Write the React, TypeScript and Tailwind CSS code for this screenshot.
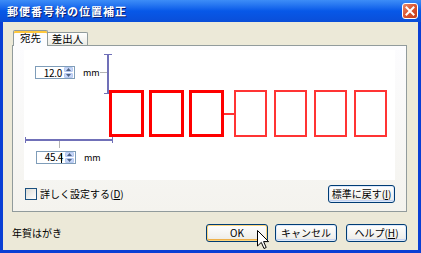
import React from "react";

const font = "font-['Noto_Sans_CJK_JP','Noto_Sans',sans-serif]";

const Spinner = ({ value, caret }: { value: string; caret?: boolean }) => (
  <div className="flex items-center gap-[8px]">
    <div className="w-[40px] h-[13px] border border-[#7f9db9] bg-white flex items-center justify-end pr-[1px]">
      <span className="text-[10px] leading-none text-black tracking-[-0.3px] pr-[2px]">
        {value}
        {caret && <span className="inline-block w-px h-[10px] bg-black align-middle -ml-[2px]" />}
      </span>
      <div className="w-[9px] h-[11px] flex flex-col gap-px">
        <div className="flex-1 rounded-[1px] bg-[#c6d6f7] border border-[#b5c8f0] flex items-center justify-center">
          <svg width="5" height="3" viewBox="0 0 5 3"><path d="M0 3 L2.5 0 L5 3 Z" fill="#4d6185" /></svg>
        </div>
        <div className="flex-1 rounded-[1px] bg-[#c6d6f7] border border-[#b5c8f0] flex items-center justify-center">
          <svg width="5" height="3" viewBox="0 0 5 3"><path d="M0 0 L2.5 3 L5 0 Z" fill="#4d6185" /></svg>
        </div>
      </div>
    </div>
    <span className="text-[9px] leading-none text-black">mm</span>
  </div>
);

const XpButton = ({ children, w, hot }: { children: React.ReactNode; w: string; hot?: boolean }) => (
  <div className={`${w} h-[18px] rounded-[3px] border border-[#003c74] bg-gradient-to-b from-white to-[#ecebe6] flex items-center justify-center text-[10px] text-black leading-none ${hot ? "shadow-[inset_0_0_0_1px_#fcd57e,inset_0_-1px_0_1px_#eeb04a]" : "shadow-[inset_0_0_0_1px_#dbe8fb,inset_0_-1px_0_1px_#c5d3f0]"}`}>
    {children}
  </div>
);

const Box = ({ thick }: { thick?: boolean }) => (
  <div className={`h-[47px] ${thick ? "w-[35px] border-[3px] border-[#ff0000]" : "w-[33px] border-2 border-[#ff3434]"} bg-white`} />
);

export default function App() {
  return (
    <div className={`relative w-[421px] h-[253px] flex flex-col bg-[#0a3fd4] ${font}`}>
      <div className="h-[22px] flex items-center pl-[7px] pr-[3px] bg-gradient-to-b from-[#3d8df7] via-[#0758e8] to-[#0a4ed8]">
        <span className="text-white font-bold text-[11px] leading-none tracking-[1px] [text-shadow:1px_1px_0_#0a1f6e]">郵便番号枠の位置補正</span>
        <div className="ml-auto w-[16px] h-[16px] rounded-[3px] border border-white bg-gradient-to-br from-[#e88a6a] via-[#d9532f] to-[#c23c1a] flex items-center justify-center">
          <svg width="10" height="10" viewBox="0 0 10 10">
            <path d="M1.5 1.5 L8.5 8.5 M8.5 1.5 L1.5 8.5" stroke="white" strokeWidth="2" strokeLinecap="square" />
          </svg>
        </div>
      </div>

      <div className="flex-1 mx-[3px] mb-[3px] bg-[#ece9d8] flex flex-col pl-[9px] pr-[11px] pt-[8px]">
        <div className="h-[15px] flex items-end pl-[1px]">
          <div className="relative z-10 w-[35px] h-[16px] -mb-px bg-[#fcfcfe] border border-b-0 border-[#919b9c] rounded-t-[2px] shadow-[inset_0_2px_0_#ffc83c] flex items-center justify-center text-[10.5px] leading-none text-black">
            宛先
          </div>
          <div className="w-[40px] h-[13px] bg-gradient-to-b from-white to-[#ecebe5] border border-l-0 border-b-0 border-[#919b9c] rounded-tr-[2px] flex items-center justify-center text-[10.5px] leading-none text-black">
            差出人
          </div>
        </div>

        <div className="h-[167px] border border-[#919b9c] bg-gradient-to-b from-[#fcfcfe] to-[#f4f3ee] flex flex-col px-[11px] pt-[4px]">
          <div className="relative h-[130px] bg-white">
            {/* vertical dimension */}
            <div className="absolute left-[83px] top-[4px] w-[2px] h-[40px] bg-[#7070b8]" />
            <div className="absolute left-[80px] top-[4px] w-[8px] h-px bg-[#7070b8]" />
            <div className="absolute left-[80px] top-[43px] w-[8px] h-px bg-[#7070b8]" />
            <div className="absolute left-[76px] top-[22px] w-[7px] h-px bg-[#b4b4b4]" />
            <div className="absolute left-[11px] top-[16px]">
              <Spinner value="12.0" />
            </div>

            {/* horizontal dimension */}
            <div className="absolute left-[1px] top-[89px] w-[88px] h-[2px] bg-[#7070b8]" />
            <div className="absolute left-[1px] top-[87px] w-px h-[6px] bg-[#7070b8]" />
            <div className="absolute left-[88px] top-[87px] w-px h-[6px] bg-[#7070b8]" />
            <div className="absolute left-[35px] top-[91px] w-px h-[7px] bg-[#b4b4b4]" />
            <div className="absolute left-[12px] top-[101px]">
              <Spinner value="45.4" caret />
            </div>

            {/* postal code boxes */}
            <div className="absolute left-[85px] top-[40px] flex items-center">
              <div className="flex gap-[5px]">
                <Box thick />
                <Box thick />
                <Box thick />
              </div>
              <div className="w-[10px] h-[2px] bg-[#ff3434]" />
              <div className="flex gap-[7px]">
                <Box />
                <Box />
                <Box />
                <Box />
              </div>
            </div>
          </div>

          <div className="mt-[5px] h-[17px] flex items-center pl-[1px]">
            <div className="w-[12px] h-[12px] border border-[#1c5180] bg-gradient-to-br from-[#dcdcd7] to-white" />
            <span className="ml-[3px] text-[10px] leading-none text-black">
              詳しく設定する(<span className="underline">D</span>)
            </span>
            <div className="ml-auto">
              <XpButton w="w-[67px]">
                標準に戻す(<span className="underline">I</span>)
              </XpButton>
            </div>
          </div>
        </div>

        <div className="flex items-center pt-[12px]">
          <span className="text-[10px] leading-none text-black">年賀はがき</span>
          <div className="ml-auto flex gap-[7px]">
            <XpButton w="w-[62px]" hot>OK</XpButton>
            <XpButton w="w-[62px]">キャンセル</XpButton>
            <div className="ml-[2px]">
              <XpButton w="w-[61px]">
                ヘルプ(<span className="underline">H</span>)
              </XpButton>
            </div>
          </div>
        </div>
      </div>

      <svg className="absolute left-[257px] top-[230px]" width="13" height="20" viewBox="0 0 13 20">
        <path d="M0.5 0.5 L0.5 16 L4.3 12.4 L7 18.5 L9.2 17.5 L6.6 11.6 L11.6 11.6 Z" fill="white" stroke="black" strokeWidth="1" strokeLinejoin="round" />
      </svg>
    </div>
  );
}
